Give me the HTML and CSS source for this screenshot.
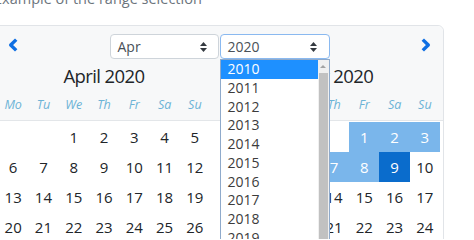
FILE: index.html
```html
<!DOCTYPE html>
<html>
<head>
<meta charset="utf-8">
<link rel="stylesheet" href="styles.css">
</head>
<body>
<div class="page">
  <p class="lead">Example of the range selection</p>
  <div class="card">
    <div class="head">
      <div class="nav">
        <span class="arrow arrow-left"><svg width="10" height="14" viewBox="0 0 10 14"><path d="M8.2 1.6 L2.7 7 L8.2 12.4" fill="none" stroke="#0f6fe3" stroke-width="3.4" stroke-linejoin="round"/></svg></span>
        <div class="selects">
          <div class="select"><span>Apr</span><svg class="caret" width="7" height="10" viewBox="0 0 4 5" preserveAspectRatio="none"><path fill="#343a40" d="M2 0L0 2h4zm0 5L0 3h4z"/></svg></div>
          <div class="select select-focus"><span>2020</span><svg class="caret" width="7" height="10" viewBox="0 0 4 5" preserveAspectRatio="none"><path fill="#343a40" d="M2 0L0 2h4zm0 5L0 3h4z"/></svg>
            <div class="dropdown">
              <ul class="options">
                <li class="active">2010</li>
                <li>2011</li>
                <li>2012</li>
                <li>2013</li>
                <li>2014</li>
                <li>2015</li>
                <li>2016</li>
                <li>2017</li>
                <li>2018</li>
                <li>2019</li>
                <li>2020</li>
              </ul>
              <div class="scrollbar">
                <span class="sb-up"></span>
                <span class="sb-thumb"></span>
              </div>
            </div>
          </div>
        </div>
        <span class="arrow arrow-right"><svg width="10" height="14" viewBox="0 0 10 14"><path d="M1.8 1.6 L7.3 7 L1.8 12.4" fill="none" stroke="#0f6fe3" stroke-width="3.4" stroke-linejoin="round"/></svg></span>
      </div>
      <div class="month-heads">
        <div class="month-head">
          <div class="title">April 2020</div>
          <div class="wdays"><span>Mo</span><span>Tu</span><span>We</span><span>Th</span><span>Fr</span><span>Sa</span><span>Su</span></div>
        </div>
        <div class="month-head">
          <div class="title">May 2020</div>
          <div class="wdays"><span>Mo</span><span>Tu</span><span>We</span><span>Th</span><span>Fr</span><span>Sa</span><span>Su</span></div>
        </div>
      </div>
    </div>
    <div class="month-bodies">
      <div class="days">
        <span></span><span></span><span>1</span><span>2</span><span>3</span><span>4</span><span>5</span>
        <span>6</span><span>7</span><span>8</span><span>9</span><span>10</span><span>11</span><span>12</span>
        <span>13</span><span>14</span><span>15</span><span>16</span><span>17</span><span>18</span><span>19</span>
        <span>20</span><span>21</span><span>22</span><span>23</span><span>24</span><span>25</span><span>26</span>
        <span>27</span><span>28</span><span>29</span><span>30</span><span></span><span></span><span></span>
      </div>
      <div class="days">
        <span></span><span></span><span></span><span></span><span class="range">1</span><span class="range">2</span><span class="range">3</span>
        <span class="range">4</span><span class="range">5</span><span class="range">6</span><span class="range">7</span><span class="range">8</span><span class="picked">9</span><span>10</span>
        <span>11</span><span>12</span><span>13</span><span>14</span><span>15</span><span>16</span><span>17</span>
        <span>18</span><span>19</span><span>20</span><span>21</span><span>22</span><span>23</span><span>24</span>
        <span>25</span><span>26</span><span>27</span><span>28</span><span>29</span><span>30</span><span>31</span>
      </div>
    </div>
  </div>
</div>
</body>
</html>
```
FILE: styles.css
```css
html, body {
  margin: 0;
  height: 239px;
  overflow: hidden;
  background: #fff;
}
body {
  font-family: "Open Sans", "Noto Sans", sans-serif;
  color: #212529;
}
.page {
  margin: -13px 0 0 -6px;
}
.lead {
  margin: 0 0 14px;
  font-size: 14.5px;
  line-height: 24px;
  color: #6c757d;
}
.card {
  width: 450px;
  box-sizing: border-box;
  border: 1px solid #e1e4e8;
  border-radius: 6px;
  background: #fff;
}
.head {
  background: #f7f8f9;
  border-bottom: 1px solid #e3e6e9;
  border-radius: 6px 6px 0 0;
}
.nav {
  display: grid;
  grid-template-columns: 1fr auto 1fr;
  align-items: start;
  padding: 8px 12px 0 13px;
}
.arrow {
  display: block;
  width: 10px;
  height: 14px;
  margin-top: 4px;
}
.arrow svg { display: block; }
.arrow-right { justify-self: end; }
.selects {
  display: flex;
  gap: 1px;
}
.select {
  position: relative;
  display: flex;
  align-items: center;
  box-sizing: border-box;
  width: 109px;
  height: 25px;
  padding: 0 11px 0 7px;
  border: 1px solid #ced4da;
  border-radius: 4px;
  background: #fff;
  font-size: 14px;
  color: #495057;
}
.select-focus {
  width: 110px;
  padding-right: 12px;
  border-color: #8ab9f0;
}
.caret {
  margin-left: auto;
  display: block;
}
.dropdown {
  position: absolute;
  left: -1px;
  top: 24px;
  width: 110px;
  height: 200px;
  box-sizing: border-box;
  display: flex;
  border: 1px solid #8faacb;
  background: #fff;
  z-index: 5;
}
.options {
  list-style: none;
  margin: 0;
  padding: 0;
  flex: 1;
}
.options li {
  height: 18.78px;
  line-height: 18.78px;
  padding-left: 7px;
  font-size: 14px;
  color: #3c3c3c;
}
.options li.active {
  background: #1e90ff;
  color: #fff;
}
.scrollbar {
  width: 11px;
  background: #f0f0f0;
  display: flex;
  flex-direction: column;
  align-items: center;
}
.sb-up {
  margin-top: 5px;
  width: 0;
  height: 0;
  border-left: 3px solid transparent;
  border-right: 3px solid transparent;
  border-bottom: 3px solid #a3a3a3;
}
.sb-thumb {
  margin-top: 5px;
  width: 9px;
  flex: 1;
  background: #c1c1c1;
}
.month-heads, .month-bodies {
  display: flex;
  gap: 18px;
  padding: 0 3px;
}
.month-head, .days {
  width: 212px;
}
.title {
  margin-top: 4px;
  font-size: 18.5px;
  line-height: 26px;
  letter-spacing: -0.6px;
  text-align: center;
  color: #212529;
}
.wdays {
  display: grid;
  grid-template-columns: repeat(7, 1fr);
  line-height: 31px;
  font-size: 12.5px;
  font-style: italic;
  text-align: center;
  color: #6cb3d6;
}
.month-bodies {
  padding-top: 1px;
}
.days {
  display: grid;
  grid-template-columns: repeat(7, 1fr);
  grid-auto-rows: 30px;
  font-size: 15px;
  line-height: 30px;
  text-align: center;
  color: #212529;
}
.days .range {
  background: #7ab6eb;
  color: #fff;
}
.days .picked {
  background: #0a6ccc;
  color: #fff;
}
```
